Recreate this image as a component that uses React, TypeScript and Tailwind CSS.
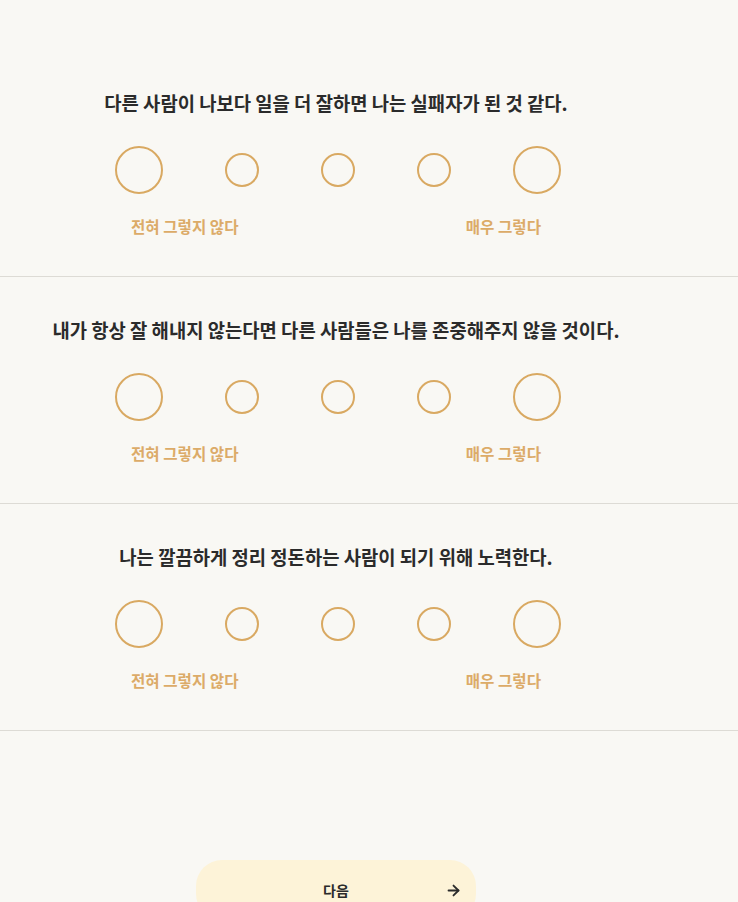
import { ArrowRight } from "lucide-react";

const QUESTIONS = [
  "다른 사람이 나보다 일을 더 잘하면 나는 실패자가 된 것 같다.",
  "내가 항상 잘 해내지 않는다면 다른 사람들은 나를 존중해주지 않을 것이다.",
  "나는 깔끔하게 정리 정돈하는 사람이 되기 위해 노력한다.",
];

const SIZES = [48, 34, 34, 34, 48];

function Question({ text }: { text: string }) {
  return (
    <section className="border-b border-[#dddbd5] pt-[39px] pb-[39px]">
      <div className="flex w-[672px] flex-col items-center">
        <h2 className="text-[18.8px] font-bold leading-[28px] text-[#2b2b2b]">{text}</h2>
        <div className="mt-[29px] flex h-[48px] items-center gap-[62px] pl-[3px]">
          {SIZES.map((s, i) => (
            <button
              key={i}
              className={
                s === 48
                  ? "h-[48px] w-[48px] rounded-full border-2 border-[#d9a962]"
                  : "h-[34px] w-[34px] rounded-full border-2 border-[#d9a962]"
              }
            />
          ))}
        </div>
        <div className="mt-[21px] flex w-[446px] justify-between pl-[18px] pr-[18px] text-[15.6px] font-bold leading-[22px] text-[#dcab68]">
          <span>전혀 그렇지 않다</span>
          <span>매우 그렇다</span>
        </div>
      </div>
    </section>
  );
}

export default function App() {
  return (
    <div
      className="min-h-screen bg-[#f9f8f4] pt-[50px]"
      style={{ fontFamily: '"Noto Sans CJK KR", "Noto Sans", sans-serif' }}
    >
      {QUESTIONS.map((q) => (
        <Question key={q} text={q} />
      ))}
      <div className="flex w-[672px] justify-center pt-[129px] pb-[40px]">
        <button className="relative flex h-[60px] w-[280px] items-center justify-center rounded-[26px] bg-[#fdf3d8] text-[14px] font-bold text-[#2b2b2b]">
          다음
          <ArrowRight className="absolute right-[14px] h-[17px] w-[17px]" strokeWidth={2.6} />
        </button>
      </div>
    </div>
  );
}
